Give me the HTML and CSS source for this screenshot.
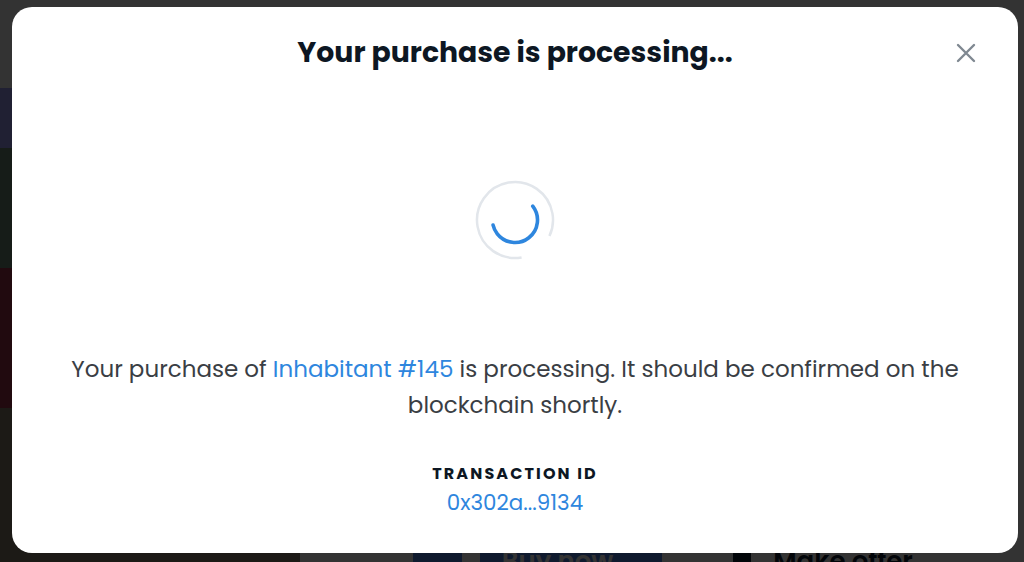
FILE: index.html
```html
<!DOCTYPE html>
<html lang="en">
<head>
    <meta charset="UTF-8">
    <title>Inhabitant #145</title>
    <link rel="stylesheet" href="styles.css">
</head>
<body>
    <div class="page">
        <div class="topbar"></div>
        <div class="art">
            <div class="art-a"></div>
            <div class="art-b"></div>
            <div class="art-c"></div>
            <div class="art-d"></div>
        </div>
        <div class="actions">
            <button class="btn btn-buy"><span class="btn-icon"></span>Buy now</button>
            <button class="btn btn-offer"><span class="btn-icon"></span>Make offer</button>
        </div>
    </div>

    <div class="overlay"></div>

    <div class="modal">
        <h1 class="modal-title">Your purchase is processing...</h1>
        <button class="close" aria-label="Close">
            <svg width="20" height="20" viewBox="0 0 20 20">
                <path d="M2 2 L18 18 M18 2 L2 18" stroke="#7f8891" stroke-width="2.4" stroke-linecap="round"/>
            </svg>
        </button>

        <svg class="spinner" width="84" height="84" viewBox="0 0 84 84">
            <!-- track with a gap on the lower right -->
            <circle cx="42" cy="42" r="38" fill="none" stroke="#e2e6eb" stroke-width="2.5"
                    stroke-dasharray="202 239" transform="rotate(80 42 42)"/>
            <circle cx="42" cy="42" r="22.5" fill="none" stroke="#2e86de" stroke-width="3.6"
                    stroke-linecap="round" stroke-dasharray="80 142" transform="rotate(-38 42 42)"/>
        </svg>

        <p class="message">
            Your purchase of <a href="#" class="link">Inhabitant #145</a> is processing. It should be confirmed on the blockchain shortly.
        </p>

        <div class="tx-label">Transaction ID</div>
        <a href="#" class="link tx-hash">0x302a...9134</a>
    </div>
</body>
</html>
```

FILE: styles.css
```css
body {
    margin: 0;
    width: 1024px;
    height: 562px;
    overflow: hidden;
    font-family: Poppins, 'Inter', 'Noto Sans', sans-serif;
    background: #fff;
}
.page {
    position: relative;
    height: 562px;
    overflow: hidden;
}
.topbar {
    height: 88px;
    background: #fff;
}
.art {
    display: flex;
    flex-direction: column;
    width: 300px;
    height: 474px;
    background: #6a6690;
}
.art-a { height: 60px; background: #a1a0ff; }
.art-b { height: 120px; background: #6d8a7a; }
.art-c { height: 140px; background: #a3364a; }
.art-d { flex: 1; background: #8a8470; }
.actions {
    position: absolute;
    left: 413px;
    top: 531px;
    display: flex;
    gap: 11px;
}
.btn {
    display: flex;
    align-items: center;
    justify-content: center;
    gap: 22px;
    font: inherit;
    font-size: 26px;
    font-weight: 600;
    height: 60px;
    border: none;
    border-radius: 8px;
}
.btn-icon {
    width: 18px;
    height: 22px;
    border-radius: 3px;
    background: currentColor;
}
.btn-buy {
    width: 249px;
    background: #4b82e6;
    color: #fff;
}
.btn-offer {
    width: 300px;
    background: #fff;
    color: #0d1b2e;
}
.overlay {
    position: fixed;
    inset: 0;
    background: rgba(0, 0, 0, 0.8);
}
.modal {
    position: fixed;
    left: 12px;
    top: 7px;
    width: 1006px;
    height: 546px;
    background: #fff;
    border-radius: 20px;
    display: flex;
    flex-direction: column;
    align-items: center;
    box-sizing: border-box;
    padding-top: 28px;
    text-align: center;
}
.modal-title {
    margin: 0;
    font-size: 28.3px;
    line-height: 34px;
    font-weight: 700;
    color: #0d1723;
}
.close {
    position: absolute;
    right: 42px;
    top: 36px;
    padding: 0;
    width: 20px;
    height: 20px;
    border: none;
    background: none;
    cursor: pointer;
}
.spinner {
    display: block;
    margin-top: 109px;
}
.message {
    margin: 89px 0 0;
    max-width: 900px;
    font-size: 23px;
    line-height: 36px;
    color: #3a3e44;
}
.link {
    color: #2e86de;
    text-decoration: none;
}
.tx-label {
    margin-top: 41px;
    font-size: 16px;
    line-height: 20px;
    font-weight: 700;
    letter-spacing: 2.1px;
    text-transform: uppercase;
    color: #0d1723;
}
.tx-hash {
    margin-top: 6px;
    font-size: 21.4px;
    line-height: 26px;
}
```
